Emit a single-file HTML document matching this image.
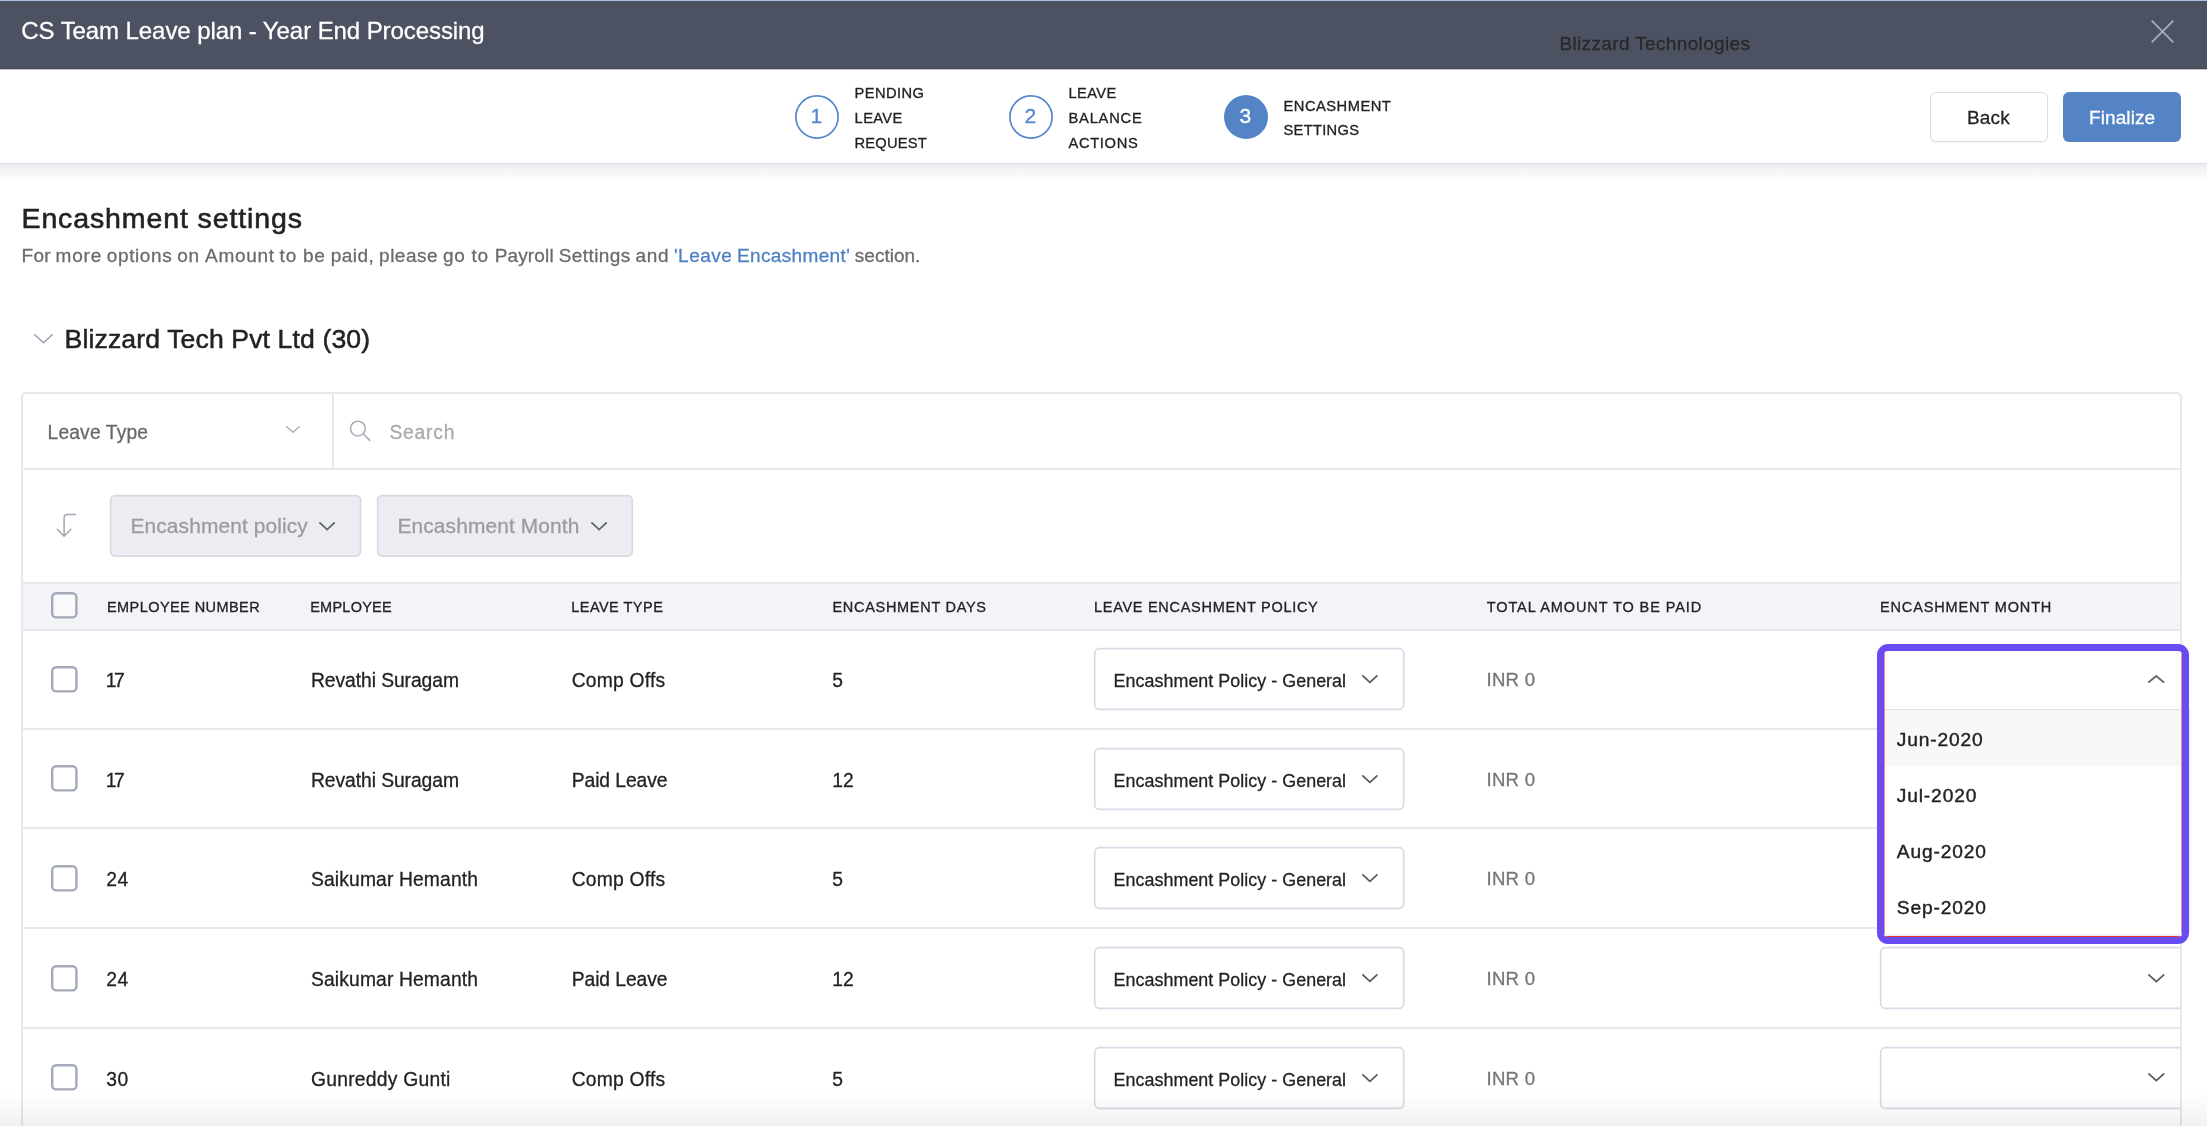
<!DOCTYPE html>
<html lang="en">
<head>
<meta charset="utf-8">
<title>CS Team Leave plan - Year End Processing</title>
<style>
*{box-sizing:border-box;margin:0;padding:0}
html,body{width:2207px;height:1126px;overflow:hidden;background:#fff}
body{font-family:"Liberation Sans",sans-serif;color:#222;position:relative}
#app{position:absolute;left:0;top:0;width:2207px;height:1126px;overflow:hidden;will-change:transform}
.t{position:absolute;white-space:nowrap;display:block;-webkit-text-stroke:.28px}
.t.lab{-webkit-text-stroke:.3px}
.t.th{-webkit-text-stroke:.3px}
.t.h1{-webkit-text-stroke:.6px}
.t.h2{-webkit-text-stroke:.5px}
.lk{color:#4c7fc4}
.t.opt{-webkit-text-stroke:.4px}
.t.dig{-webkit-text-stroke:.3px}
.ic{position:absolute;display:block;overflow:visible}
.abs{position:absolute}
.topline{left:0;top:0;width:2207px;height:1px;background:#a9c0e2}
.hdr{left:0;top:1px;width:2207px;height:68px;background:#4d5262;border-bottom:1px solid #434857}
.bar{left:0;top:69px;width:2207px;height:94px;background:#fff;border-top:1px solid #c4c6ce;}
.barsh{left:0;top:163px;width:2207px;height:21px;background:linear-gradient(to bottom,rgba(85,95,125,.26) 0,rgba(85,95,125,.125) 5%,rgba(85,95,125,.065) 35%,rgba(85,95,125,.02) 70%,rgba(85,95,125,0) 100%)}
.btn{top:92px;height:50px;border-radius:6px}
.btn.back{left:1930px;width:118px;border:1px solid #dcdde1;background:#fff;box-shadow:0 1px 1px rgba(0,0,0,.04)}
.btn.fin{left:2063px;width:118px;background:#5584c6}
.panel{left:21px;top:392px;width:2161px;height:192px;border:2px solid #e7e8ed;border-radius:5px;background:#fff}
.tbl{left:21px;top:580px;width:2161px;height:560px;border-left:2px solid #e7e8ed;border-right:2px solid #e7e8ed}
.thead{left:23px;top:584px;width:2157px;height:45px;background:#f3f4f8}
.hline{left:23px;width:2157px;height:2px;background:#e8e9ee}
.dd{left:1877px;top:644px;width:312px;height:300px;border:7px solid #694bf4;border-radius:11px;background:#fff;overflow:hidden}
.fade{left:0;top:1092px;width:2207px;height:34px;background:linear-gradient(to bottom,rgba(0,0,0,0),rgba(0,0,0,.055))}
</style>
</head>
<body>
<div id="app">

<div class="abs topline"></div>
<header class="abs hdr"></header>
<span class="t" style="left:21.3px;top:18.7px;font-size:24px;line-height:24px;letter-spacing:-0.08px;color:#fff;">CS Team Leave plan - Year End Processing</span>
<span class="t" style="left:1559.4px;top:34.2px;font-size:19px;line-height:19px;letter-spacing:0.36px;color:#28282a;">Blizzard Technologies</span>
<svg class="ic" style="left:2151px;top:20px" width="23" height="23" viewBox="0 0 23 23"><path d="M0.7 0.7 L22.3 22.3 M22.3 0.7 L0.7 22.3" stroke="#a9adb8" stroke-width="1.8" fill="none"/></svg>
<nav class="abs bar"></nav>
<div class="abs barsh"></div>
<svg class="ic" style="left:795px;top:95px" width="44" height="44" viewBox="0 0 44 44"><circle cx="22" cy="22" r="21.1" fill="none" stroke="#5687cc" stroke-width="1.7"/></svg>
<span class="t dig" style="left:810.5px;top:104.7px;font-size:21px;line-height:21px;color:#5687cc;">1</span>
<span class="t lab" style="left:854.6px;top:86.0px;font-size:14.7px;line-height:14.7px;letter-spacing:0.4px;color:#222;">PENDING</span>
<span class="t lab" style="left:854.6px;top:111.0px;font-size:14.7px;line-height:14.7px;letter-spacing:0.37px;color:#222;">LEAVE</span>
<span class="t lab" style="left:854.6px;top:136.0px;font-size:14.7px;line-height:14.7px;letter-spacing:0.17px;color:#222;">REQUEST</span>
<svg class="ic" style="left:1009.3px;top:95px" width="44" height="44" viewBox="0 0 44 44"><circle cx="22" cy="22" r="21.1" fill="none" stroke="#5687cc" stroke-width="1.7"/></svg>
<span class="t dig" style="left:1024.6px;top:104.7px;font-size:21px;line-height:21px;color:#5687cc;">2</span>
<span class="t lab" style="left:1068.5px;top:86.0px;font-size:14.7px;line-height:14.7px;letter-spacing:0.37px;color:#222;">LEAVE</span>
<span class="t lab" style="left:1068.5px;top:111.0px;font-size:14.7px;line-height:14.7px;letter-spacing:0.78px;color:#222;">BALANCE</span>
<span class="t lab" style="left:1068.5px;top:136.0px;font-size:14.7px;line-height:14.7px;letter-spacing:0.65px;color:#222;">ACTIONS</span>
<svg class="ic" style="left:1224px;top:95px" width="44" height="44" viewBox="0 0 44 44"><circle cx="22" cy="22" r="22" fill="#5584c6" stroke="none" stroke-width="1.7"/></svg>
<span class="t dig" style="left:1239.6px;top:104.7px;font-size:21px;line-height:21px;color:#fff;">3</span>
<span class="t lab" style="left:1283.5px;top:98.9px;font-size:14.7px;line-height:14.7px;letter-spacing:0.5px;color:#222;">ENCASHMENT</span>
<span class="t lab" style="left:1283.5px;top:123.3px;font-size:14.7px;line-height:14.7px;letter-spacing:0.3px;color:#222;">SETTINGS</span>
<div class="abs btn back"></div>
<span class="t" style="left:1967.0px;top:107.7px;font-size:19px;line-height:19px;letter-spacing:0.15px;color:#222;">Back</span>
<div class="abs btn fin"></div>
<span class="t" style="left:2089.0px;top:107.7px;font-size:19px;line-height:19px;letter-spacing:0.1px;color:#fff;">Finalize</span>
<span class="t h1" style="left:21.5px;top:203.9px;font-size:28.5px;line-height:28.5px;letter-spacing:0.88px;color:#222;">Encashment settings</span>
<p class="t sub" style="left:21.6px;top:245.9px;font-size:19px;line-height:19px;letter-spacing:0.3px;color:#6a6a6a;white-space:pre"><span style="display:inline-block;width:34.0px;letter-spacing:0.23px">For </span><span style="display:inline-block;width:51.2px;letter-spacing:0.78px">more </span><span style="display:inline-block;width:70.4px;letter-spacing:0.61px">options </span><span style="display:inline-block;width:27.9px;letter-spacing:0.80px">on </span><span style="display:inline-block;width:74.5px;letter-spacing:0.70px">Amount </span><span style="display:inline-block;width:23.4px;letter-spacing:0.80px">to </span><span style="display:inline-block;width:27.8px;letter-spacing:0.80px">be </span><span style="display:inline-block;width:48.3px;letter-spacing:0.46px">paid, </span><span style="display:inline-block;width:63.9px;letter-spacing:0.52px">please </span><span style="display:inline-block;width:28.6px;letter-spacing:0.80px">go </span><span style="display:inline-block;width:23.1px;letter-spacing:0.80px">to </span><span style="display:inline-block;width:64.1px;letter-spacing:0.17px">Payroll </span><span style="display:inline-block;width:76.8px;letter-spacing:0.41px">Settings </span><span style="display:inline-block;width:38.5px;letter-spacing:0.67px">and </span><span class="lk" style="display:inline-block;width:63.0px;letter-spacing:0.47px">'Leave </span><span class="lk" style="display:inline-block;width:117.8px;letter-spacing:0.35px">Encashment' </span><span style="display:inline-block;width:67.5px;letter-spacing:0.00px">section. </span></p>
<svg class="ic" style="left:33.5px;top:334px" width="19" height="9.5" viewBox="0 0 19 9.5"><polyline points="0.75,0.75 9.5,8.75 18.25,0.75" fill="none" stroke="#9aa0ae" stroke-width="1.5" stroke-linecap="round" stroke-linejoin="round"/></svg>
<span class="t h2" style="left:64.6px;top:326.3px;font-size:26.6px;line-height:26.6px;letter-spacing:0.12px;color:#222;">Blizzard Tech Pvt Ltd (30)</span>
<section class="abs panel"></section>
<div class="abs" style="left:23px;top:468px;width:2157px;height:2px;background:#e8e9ee"></div>
<div class="abs" style="left:332px;top:394px;width:2px;height:74px;background:#e8e9ee"></div>
<span class="t" style="left:47.6px;top:422.7px;font-size:19.3px;line-height:19.3px;letter-spacing:0.12px;color:#686868;">Leave Type</span>
<svg class="ic" style="left:286px;top:426.2px" width="14" height="7" viewBox="0 0 14 7"><polyline points="0.65,0.65 7.0,6.35 13.35,0.65" fill="none" stroke="#a5a9b4" stroke-width="1.3" stroke-linecap="round" stroke-linejoin="round"/></svg>
<svg class="ic" style="left:349px;top:420px" width="22" height="22" viewBox="0 0 22 22"><circle cx="8.9" cy="8.6" r="7.4" fill="none" stroke="#a8acb9" stroke-width="1.5"/><path d="M14.3 14 L20.8 20.4" stroke="#a8acb9" stroke-width="1.5" stroke-linecap="round"/></svg>
<span class="t" style="left:389.4px;top:422.7px;font-size:19.3px;line-height:19.3px;letter-spacing:0.8px;color:#a9a9a9;">Search</span>
<svg class="ic" style="left:56px;top:513px" width="21" height="25" viewBox="0 0 21 25"><path d="M19.5 1.6 H11.3 Q8.1 1.6 8.1 4.8 V23 M1.3 16.2 L8.1 23.2 L14.9 16.2" fill="none" stroke="#a3a7b3" stroke-width="1.5" stroke-linecap="round" stroke-linejoin="round"/></svg>
<svg class="ic" style="left:109.30px;top:494.00px;overflow:hidden" width="253.20" height="63.70" viewBox="0 0 253.20 63.70"><rect x="1.6" y="1.6" width="250" height="60.5" rx="4.5" ry="4.5" fill="#ecedf2" stroke="#d7d9e2" stroke-width="1.6"/></svg>
<span class="t" style="left:130.5px;top:515.9px;font-size:20.9px;line-height:20.9px;letter-spacing:0.12px;color:#9b9b9b;">Encashment policy</span>
<svg class="ic" style="left:318.7px;top:521.8px" width="16.2" height="8.6" viewBox="0 0 16.2 8.6"><polyline points="0.9,0.9 8.1,7.699999999999999 15.299999999999999,0.9" fill="none" stroke="#62656c" stroke-width="1.8" stroke-linecap="round" stroke-linejoin="round"/></svg>
<svg class="ic" style="left:376.10px;top:494.00px;overflow:hidden" width="257.90" height="63.70" viewBox="0 0 257.90 63.70"><rect x="1.6" y="1.6" width="254.7" height="60.5" rx="4.5" ry="4.5" fill="#ecedf2" stroke="#d7d9e2" stroke-width="1.6"/></svg>
<span class="t" style="left:397.5px;top:515.9px;font-size:20.9px;line-height:20.9px;letter-spacing:0.12px;color:#9b9b9b;">Encashment Month</span>
<svg class="ic" style="left:590.8px;top:521.8px" width="16.2" height="8.6" viewBox="0 0 16.2 8.6"><polyline points="0.9,0.9 8.1,7.699999999999999 15.299999999999999,0.9" fill="none" stroke="#62656c" stroke-width="1.8" stroke-linecap="round" stroke-linejoin="round"/></svg>
<div class="abs tbl"></div>
<div class="abs thead"></div>
<svg class="ic" style="left:51.4px;top:592.3px" width="26.6" height="26.6" viewBox="0 0 26.6 26.6"><rect x="1.2" y="1.2" width="24.2" height="24.2" rx="4" ry="4" fill="#f9f9fc" stroke="#a4a9b8" stroke-width="2.4"/></svg>
<span class="t th" style="left:107.0px;top:599.8px;font-size:14.5px;line-height:14.5px;letter-spacing:0.43px;color:#222;">EMPLOYEE NUMBER</span>
<span class="t th" style="left:310.2px;top:599.8px;font-size:14.5px;line-height:14.5px;letter-spacing:0.24px;color:#222;">EMPLOYEE</span>
<span class="t th" style="left:571.2px;top:599.8px;font-size:14.5px;line-height:14.5px;letter-spacing:0.48px;color:#222;">LEAVE TYPE</span>
<span class="t th" style="left:832.4px;top:599.8px;font-size:14.5px;line-height:14.5px;letter-spacing:0.71px;color:#222;">ENCASHMENT DAYS</span>
<span class="t th" style="left:1094.0px;top:599.8px;font-size:14.5px;line-height:14.5px;letter-spacing:0.71px;color:#222;">LEAVE ENCASHMENT POLICY</span>
<span class="t th" style="left:1486.7px;top:599.8px;font-size:14.5px;line-height:14.5px;letter-spacing:0.91px;color:#222;">TOTAL AMOUNT TO BE PAID</span>
<span class="t th" style="left:1880.0px;top:599.8px;font-size:14.5px;line-height:14.5px;letter-spacing:0.86px;color:#222;">ENCASHMENT MONTH</span>
<div class="abs hline" style="top:629px;background:#e6e8ed"></div>
<div class="abs hline" style="top:728px"></div>
<svg class="ic" style="left:51.4px;top:665.5px" width="26.6" height="26.6" viewBox="0 0 26.6 26.6"><rect x="1.2" y="1.2" width="24.2" height="24.2" rx="4" ry="4" fill="#fff" stroke="#a4a9b8" stroke-width="2.4"/></svg>
<span class="t" style="left:105.7px;top:670.9px;font-size:19.3px;line-height:19.3px;letter-spacing:-2.3px;color:#222;">17</span>
<span class="t" style="left:311.0px;top:670.9px;font-size:19.3px;line-height:19.3px;letter-spacing:-0.07px;color:#222;">Revathi Suragam</span>
<span class="t" style="left:571.7px;top:670.9px;font-size:19.3px;line-height:19.3px;letter-spacing:0.22px;color:#222;">Comp Offs</span>
<span class="t" style="left:832.3px;top:670.9px;font-size:19.3px;line-height:19.3px;color:#222;">5</span>
<svg class="ic" style="left:1092.50px;top:647.00px;overflow:hidden" width="312.40" height="64.00" viewBox="0 0 312.40 64.00"><rect x="1.7" y="1.7" width="309" height="60.6" rx="4.5" ry="4.5" fill="#fff" stroke="#d8dbe5" stroke-width="1.7"/></svg>
<span class="t" style="left:1113.6px;top:673.0px;font-size:17.9px;line-height:17.9px;letter-spacing:0.03px;color:#222;">Encashment Policy - General</span>
<svg class="ic" style="left:1362.3px;top:674.9px" width="15.8" height="8.3" viewBox="0 0 15.8 8.3"><polyline points="0.85,0.85 7.9,7.450000000000001 14.950000000000001,0.85" fill="none" stroke="#55585f" stroke-width="1.7" stroke-linecap="round" stroke-linejoin="round"/></svg>
<span class="t" style="left:1486.5px;top:670.9px;font-size:18.6px;line-height:18.6px;letter-spacing:0.25px;color:#757575;">INR 0</span>
<div class="abs hline" style="top:827px"></div>
<svg class="ic" style="left:51.4px;top:765.2px" width="26.6" height="26.6" viewBox="0 0 26.6 26.6"><rect x="1.2" y="1.2" width="24.2" height="24.2" rx="4" ry="4" fill="#fff" stroke="#a4a9b8" stroke-width="2.4"/></svg>
<span class="t" style="left:105.7px;top:770.5px;font-size:19.3px;line-height:19.3px;letter-spacing:-2.3px;color:#222;">17</span>
<span class="t" style="left:311.0px;top:770.5px;font-size:19.3px;line-height:19.3px;letter-spacing:-0.07px;color:#222;">Revathi Suragam</span>
<span class="t" style="left:571.7px;top:770.5px;font-size:19.3px;line-height:19.3px;letter-spacing:-0.07px;color:#222;">Paid Leave</span>
<span class="t" style="left:832.3px;top:770.5px;font-size:19.3px;line-height:19.3px;color:#222;">12</span>
<svg class="ic" style="left:1092.50px;top:746.67px;overflow:hidden" width="312.40" height="64.00" viewBox="0 0 312.40 64.00"><rect x="1.7" y="1.7" width="309" height="60.6" rx="4.5" ry="4.5" fill="#fff" stroke="#d8dbe5" stroke-width="1.7"/></svg>
<span class="t" style="left:1113.6px;top:772.7px;font-size:17.9px;line-height:17.9px;letter-spacing:0.03px;color:#222;">Encashment Policy - General</span>
<svg class="ic" style="left:1362.3px;top:774.6px" width="15.8" height="8.3" viewBox="0 0 15.8 8.3"><polyline points="0.85,0.85 7.9,7.450000000000001 14.950000000000001,0.85" fill="none" stroke="#55585f" stroke-width="1.7" stroke-linecap="round" stroke-linejoin="round"/></svg>
<span class="t" style="left:1486.5px;top:770.5px;font-size:18.6px;line-height:18.6px;letter-spacing:0.25px;color:#757575;">INR 0</span>
<div class="abs hline" style="top:927px"></div>
<svg class="ic" style="left:51.4px;top:864.9px" width="26.6" height="26.6" viewBox="0 0 26.6 26.6"><rect x="1.2" y="1.2" width="24.2" height="24.2" rx="4" ry="4" fill="#fff" stroke="#a4a9b8" stroke-width="2.4"/></svg>
<span class="t" style="left:106.3px;top:870.2px;font-size:19.3px;line-height:19.3px;letter-spacing:0.6px;color:#222;">24</span>
<span class="t" style="left:311.0px;top:870.2px;font-size:19.3px;line-height:19.3px;letter-spacing:0.13px;color:#222;">Saikumar Hemanth</span>
<span class="t" style="left:571.7px;top:870.2px;font-size:19.3px;line-height:19.3px;letter-spacing:0.22px;color:#222;">Comp Offs</span>
<span class="t" style="left:832.3px;top:870.2px;font-size:19.3px;line-height:19.3px;color:#222;">5</span>
<svg class="ic" style="left:1092.50px;top:846.34px;overflow:hidden" width="312.40" height="64.00" viewBox="0 0 312.40 64.00"><rect x="1.7" y="1.7" width="309" height="60.6" rx="4.5" ry="4.5" fill="#fff" stroke="#d8dbe5" stroke-width="1.7"/></svg>
<span class="t" style="left:1113.6px;top:872.4px;font-size:17.9px;line-height:17.9px;letter-spacing:0.03px;color:#222;">Encashment Policy - General</span>
<svg class="ic" style="left:1362.3px;top:874.2px" width="15.8" height="8.3" viewBox="0 0 15.8 8.3"><polyline points="0.85,0.85 7.9,7.450000000000001 14.950000000000001,0.85" fill="none" stroke="#55585f" stroke-width="1.7" stroke-linecap="round" stroke-linejoin="round"/></svg>
<span class="t" style="left:1486.5px;top:870.2px;font-size:18.6px;line-height:18.6px;letter-spacing:0.25px;color:#757575;">INR 0</span>
<div class="abs hline" style="top:1027px"></div>
<svg class="ic" style="left:51.4px;top:964.5px" width="26.6" height="26.6" viewBox="0 0 26.6 26.6"><rect x="1.2" y="1.2" width="24.2" height="24.2" rx="4" ry="4" fill="#fff" stroke="#a4a9b8" stroke-width="2.4"/></svg>
<span class="t" style="left:106.3px;top:969.9px;font-size:19.3px;line-height:19.3px;letter-spacing:0.6px;color:#222;">24</span>
<span class="t" style="left:311.0px;top:969.9px;font-size:19.3px;line-height:19.3px;letter-spacing:0.13px;color:#222;">Saikumar Hemanth</span>
<span class="t" style="left:571.7px;top:969.9px;font-size:19.3px;line-height:19.3px;letter-spacing:-0.07px;color:#222;">Paid Leave</span>
<span class="t" style="left:832.3px;top:969.9px;font-size:19.3px;line-height:19.3px;color:#222;">12</span>
<svg class="ic" style="left:1092.50px;top:946.01px;overflow:hidden" width="312.40" height="64.00" viewBox="0 0 312.40 64.00"><rect x="1.7" y="1.7" width="309" height="60.6" rx="4.5" ry="4.5" fill="#fff" stroke="#d8dbe5" stroke-width="1.7"/></svg>
<span class="t" style="left:1113.6px;top:972.1px;font-size:17.9px;line-height:17.9px;letter-spacing:0.03px;color:#222;">Encashment Policy - General</span>
<svg class="ic" style="left:1362.3px;top:973.9px" width="15.8" height="8.3" viewBox="0 0 15.8 8.3"><polyline points="0.85,0.85 7.9,7.450000000000001 14.950000000000001,0.85" fill="none" stroke="#55585f" stroke-width="1.7" stroke-linecap="round" stroke-linejoin="round"/></svg>
<span class="t" style="left:1486.5px;top:969.9px;font-size:18.6px;line-height:18.6px;letter-spacing:0.25px;color:#757575;">INR 0</span>
<svg class="ic" style="left:1878.70px;top:946.01px;overflow:hidden" width="301.30" height="64.00" viewBox="0 0 301.30 64.00"><rect x="1.7" y="1.7" width="309" height="60.6" rx="4.5" ry="4.5" fill="#fff" stroke="#d8dbe5" stroke-width="1.7"/></svg>
<svg class="ic" style="left:2148.2px;top:973.6px" width="16.6" height="8.6" viewBox="0 0 16.6 8.6"><polyline points="0.85,0.85 8.3,7.75 15.750000000000002,0.85" fill="none" stroke="#55585f" stroke-width="1.7" stroke-linecap="round" stroke-linejoin="round"/></svg>
<div class="abs hline" style="top:1126px"></div>
<svg class="ic" style="left:51.4px;top:1064.2px" width="26.6" height="26.6" viewBox="0 0 26.6 26.6"><rect x="1.2" y="1.2" width="24.2" height="24.2" rx="4" ry="4" fill="#fff" stroke="#a4a9b8" stroke-width="2.4"/></svg>
<span class="t" style="left:106.3px;top:1069.5px;font-size:19.3px;line-height:19.3px;letter-spacing:0.6px;color:#222;">30</span>
<span class="t" style="left:311.0px;top:1069.5px;font-size:19.3px;line-height:19.3px;letter-spacing:0.25px;color:#222;">Gunreddy Gunti</span>
<span class="t" style="left:571.7px;top:1069.5px;font-size:19.3px;line-height:19.3px;letter-spacing:0.22px;color:#222;">Comp Offs</span>
<span class="t" style="left:832.3px;top:1069.5px;font-size:19.3px;line-height:19.3px;color:#222;">5</span>
<svg class="ic" style="left:1092.50px;top:1045.68px;overflow:hidden" width="312.40" height="64.00" viewBox="0 0 312.40 64.00"><rect x="1.7" y="1.7" width="309" height="60.6" rx="4.5" ry="4.5" fill="#fff" stroke="#d8dbe5" stroke-width="1.7"/></svg>
<span class="t" style="left:1113.6px;top:1071.7px;font-size:17.9px;line-height:17.9px;letter-spacing:0.03px;color:#222;">Encashment Policy - General</span>
<svg class="ic" style="left:1362.3px;top:1073.6px" width="15.8" height="8.3" viewBox="0 0 15.8 8.3"><polyline points="0.85,0.85 7.9,7.450000000000001 14.950000000000001,0.85" fill="none" stroke="#55585f" stroke-width="1.7" stroke-linecap="round" stroke-linejoin="round"/></svg>
<span class="t" style="left:1486.5px;top:1069.5px;font-size:18.6px;line-height:18.6px;letter-spacing:0.25px;color:#757575;">INR 0</span>
<svg class="ic" style="left:1878.70px;top:1045.68px;overflow:hidden" width="301.30" height="64.00" viewBox="0 0 301.30 64.00"><rect x="1.7" y="1.7" width="309" height="60.6" rx="4.5" ry="4.5" fill="#fff" stroke="#d8dbe5" stroke-width="1.7"/></svg>
<svg class="ic" style="left:2148.2px;top:1073.3px" width="16.6" height="8.6" viewBox="0 0 16.6 8.6"><polyline points="0.85,0.85 8.3,7.75 15.750000000000002,0.85" fill="none" stroke="#55585f" stroke-width="1.7" stroke-linecap="round" stroke-linejoin="round"/></svg>
<div class="abs dd"><div class="abs" style="left:0;top:58px;width:298px;height:1px;background:#e0e0e3"></div><div class="abs" style="left:0;top:59px;width:298px;height:56px;background:#f8f8f8"></div><div class="abs" style="left:0;top:0;width:1px;height:286px;background:#f08a80"></div><div class="abs" style="left:297px;top:0;width:1px;height:286px;background:#e58fa0"></div><div class="abs" style="left:0;top:283px;width:298px;height:2px;background:#eaf0f6"></div><div class="abs" style="left:0;top:285px;width:298px;height:1px;background:#e33b31"></div></div>
<svg class="ic" style="left:2148.4px;top:675.0px" width="16.4" height="8.0" viewBox="0 0 16.4 8.0"><polyline points="0.95,7.05 8.2,0.95 15.45,7.05" fill="none" stroke="#666a72" stroke-width="1.9" stroke-linecap="round" stroke-linejoin="round"/></svg>
<span class="t opt" style="left:1896.8px;top:730.2px;font-size:19.2px;line-height:19.2px;letter-spacing:0.85px;color:#222;">Jun-2020</span>
<span class="t opt" style="left:1896.8px;top:786.2px;font-size:19.2px;line-height:19.2px;letter-spacing:0.85px;color:#222;">Jul-2020</span>
<span class="t opt" style="left:1896.8px;top:842.2px;font-size:19.2px;line-height:19.2px;letter-spacing:0.85px;color:#222;">Aug-2020</span>
<span class="t opt" style="left:1896.8px;top:898.2px;font-size:19.2px;line-height:19.2px;letter-spacing:0.85px;color:#222;">Sep-2020</span>
<div class="abs" style="left:2189px;top:709px;width:2px;height:224px;background:#f0f0f1"></div>
<div class="abs fade"></div>
</div>
</body>
</html>
